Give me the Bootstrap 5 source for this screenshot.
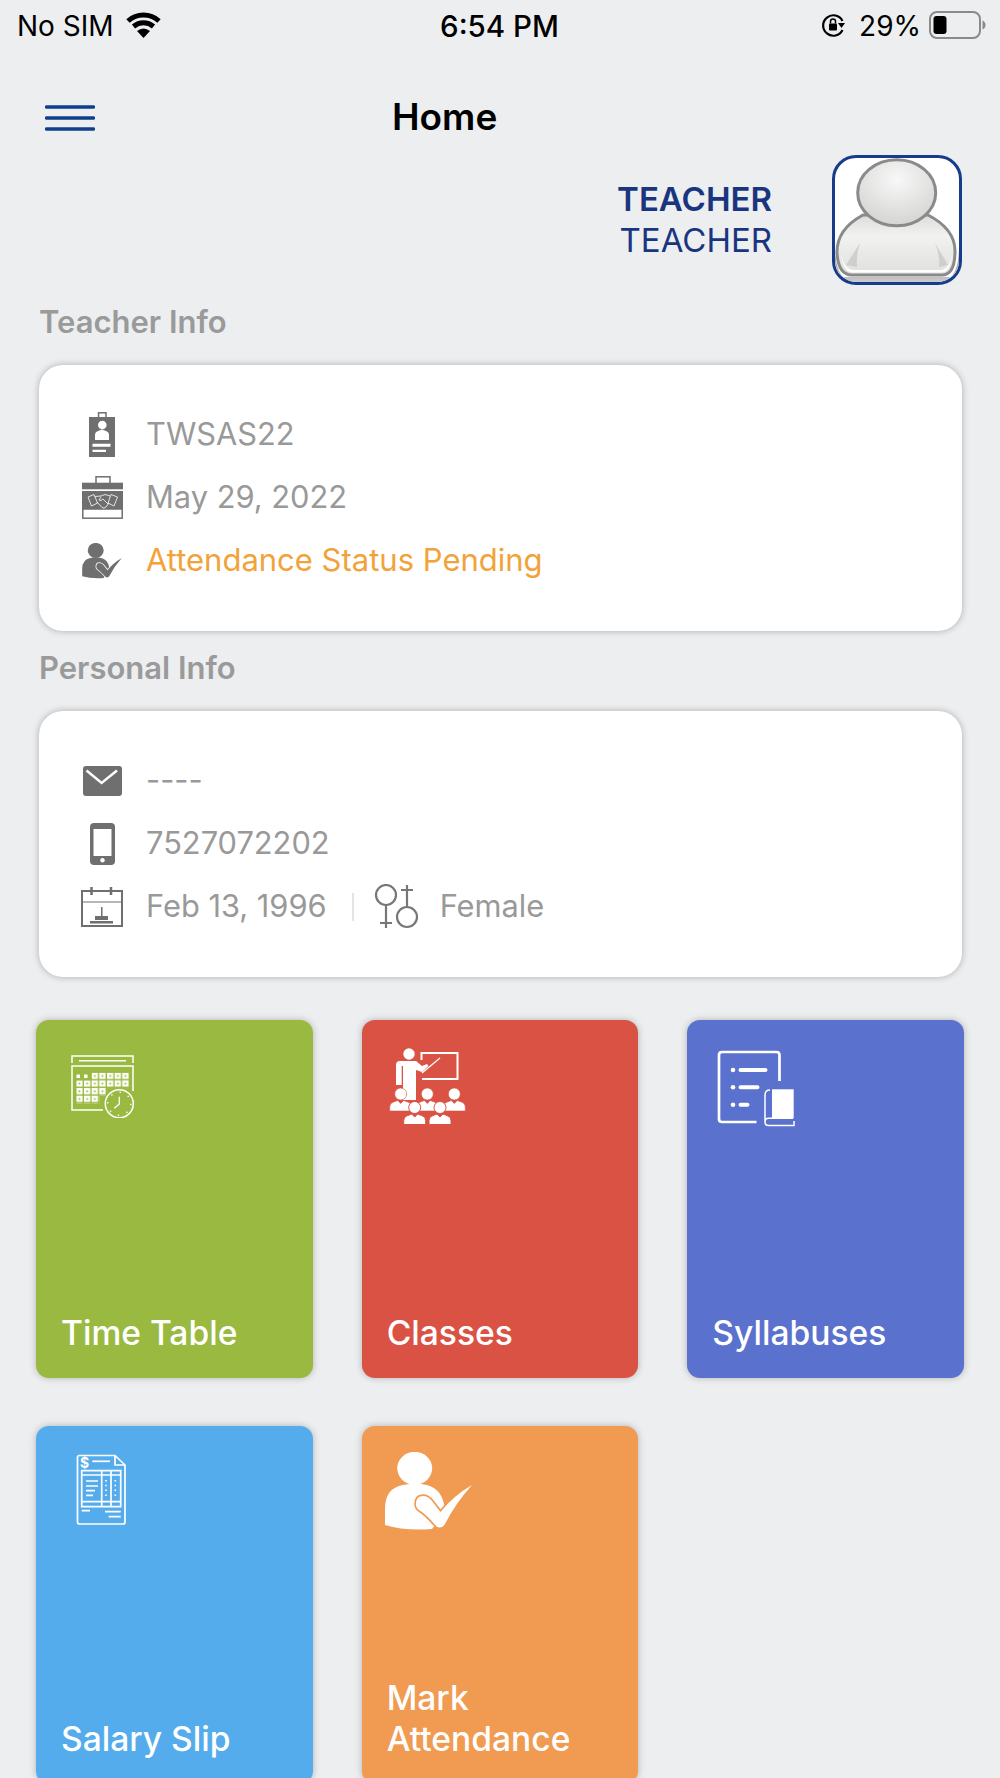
<!DOCTYPE html>
<html lang="en">
  <head>
    <meta charset="UTF-8" />
    <meta name="viewport" content="width=device-width, initial-scale=1.0" />
    <title>Home</title>
    <link
      href="https://cdn.jsdelivr.net/npm/bootstrap@5.3.2/dist/css/bootstrap.min.css"
      rel="stylesheet"
    />
    <style>
      html, body { height: 1778px; overflow: hidden; }
      body { background: #eceef0; font-family: "Inter", "Liberation Sans", sans-serif; color: #000; }
      svg { display: block; flex: none; }

      .status-bar { height: 50px; padding: 1px 14px 0 17px; font-size: 28px; line-height: 50px; }
      .status-side { flex: 1 1 0; }
      .status-time { font-weight: 500; font-size: 29.5px; margin-right: 4px; }
      .wifi-icon { margin: 0 0 3px 11px; }
      .battery-pct { margin: 0 8px 0 13px; }
      .battery-icon, .lock-icon { margin-bottom: 2px; }

      .top-bar { height: 105px; padding: 0 0 0 45px; }
      .top-title { font-size: 37px; font-weight: 600; margin: 0 0 0 297px; line-height: 1; padding-bottom: 20px; }
      .menu-icon { margin-bottom: 23px; }

      .profile-row { padding-right: 38px; gap: 60px; height: 130px; }
      .profile-name { color: #1a357f; font-size: 33px; line-height: 41px; text-align: right; }
      .profile-photo { width: 130px; height: 130px; border: 3px solid #173c8c; border-radius: 24px; background: #fff; overflow: hidden; }

      .section-title { margin: 19px 0 25px 39px; color: #9a9a9a; font-size: 31px; font-weight: 600; line-height: 36px; }
      .info-card { margin: 0 38px 0 39px; height: 266px; padding: 38px 0 0 41px; border: 0; border-radius: 24px; box-shadow: 0 0 7px rgba(0, 0, 0, .28); }
      .info-row { height: 63px; color: #999; font-size: 30.8px; }
      .info-row .ico-box { width: 44px; margin-right: 22px; }
      .status-pending { color: #f1a33a; font-size: 31px; }
      .info-sep { width: 2px; height: 28px; background: #e4e4e4; margin: 0 20px 0 25px; }
      .gender-text { margin-left: 21px; }

      .tile-grid { display: grid; grid-template-columns: repeat(3, 1fr); gap: 48px 49px; margin: 43px 36px 0; }
      .tile { height: 358px; border: 0; border-radius: 13px; padding: 0 25px 25px; color: #fff; font-size: 33.6px; font-weight: 500; line-height: 41px; box-shadow: 0 0 7px rgba(0, 0, 0, .25); }
      .tile-green { background: #9ab941; }
      .tile-red { background: #d95243; }
      .tile-indigo { background: #5a71cd; }
      .tile-sky { background: #54aced; }
      .tile-orange { background: #f19a52; }
      .ico-timetable { margin: 35px 0 0 10px; }
      .ico-classes { margin: 28px 0 0 2px; }
      .ico-syllabus { margin: 30px 0 0 5px; }
      .ico-salary { margin: 28px 0 0 15px; }
      .ico-mark { margin: 26px 0 0 -2px; }
      .check-halo { stroke: var(--halo); stroke-width: 3.5; paint-order: stroke; }
    </style>
  </head>
  <body>
    <svg width="0" height="0" class="position-absolute">
      <defs>
        <symbol id="personCheck" viewBox="0 0 87 79">
          <ellipse cx="29.7" cy="16.3" rx="17.5" ry="16.5" />
          <path d="M0 73V57Q0 36 18 33Q30 30 42 33Q56 37 59 52V62L47 77Q20 79 0 73Z" />
          <path class="check-halo" d="M31 52Q31 44 38 44Q43 44 47 49L55.500 60Q68 44 87 33Q70 52 60 72Q56 78 51 74Q42 63 34 58Q31 56 31 52Z" />
        </symbol>
        <g id="student">
          <circle r="6" />
          <path d="M-11 17v-4q0-4 4-5l4-1.500 3 3 3-3 4 1.500q4 1 4 5v4z" />
        </g>
        <pattern id="calCell" x="5.300" y="17.700" width="7.670" height="7.670" patternUnits="userSpaceOnUse">
          <path fill="#fff" fill-rule="evenodd" d="M0 0h6.300v6.300H0zM2.300 2.300v1.800h1.800V2.300z" />
        </pattern>
        <radialGradient id="headFill" cx=".5" cy=".3" r=".7">
          <stop offset="0" stop-color="#f8f8f8" />
          <stop offset="1" stop-color="#d4d4d2" />
        </radialGradient>
        <linearGradient id="bodyFill" x1="0" y1="0" x2="0" y2="1">
          <stop offset="0" stop-color="#dcdcda" />
          <stop offset=".35" stop-color="#f2f2f1" />
          <stop offset="1" stop-color="#dfdfdd" />
        </linearGradient>
        <linearGradient id="baseFill" x1="0" y1="0" x2="0" y2="1">
          <stop offset="0" stop-color="#8d8d8d" />
          <stop offset="1" stop-color="#c9c9c9" />
        </linearGradient>
      </defs>
    </svg>

    <!-- status bar -->
    <div class="status-bar d-flex align-items-center">
      <div class="status-side d-flex align-items-center">
        <span>No SIM</span>
        <svg class="wifi-icon" width="37" height="27" viewBox="0 0 37 27">
          <path d="M3 10A23 23 0 0 1 34 10M8.500 15.500A15.500 15.500 0 0 1 28.500 15.500" fill="none" stroke="#000" stroke-width="5" />
          <path d="M18.500 27L12 20Q18.500 15 25 20Z" />
        </svg>
      </div>
      <div class="status-time">6:54 PM</div>
      <div class="status-side d-flex align-items-center justify-content-end">
        <svg class="lock-icon" width="25" height="24" viewBox="0 0 25 24">
          <path d="M21.500 8A10.200 10.200 0 1 0 21.500 17" fill="none" stroke="#000" stroke-width="2.200" />
          <path d="M17 10h7l-3.500 5z" />
          <rect x="8" y="10.500" width="8" height="7" rx="1" />
          <path d="M9.500 10.500V8.500a2.500 2.500 0 0 1 5 0v2" fill="none" stroke="#000" stroke-width="1.500" />
        </svg>
        <span class="battery-pct">29%</span>
        <svg class="battery-icon" width="57" height="28" viewBox="0 0 57 28">
          <rect x="1" y="1" width="50" height="26" rx="7" fill="none" stroke="#8a8a8a" stroke-width="2" />
          <rect x="4.500" y="5" width="13" height="18" rx="3" />
          <path d="M53.500 9.500q3 1.500 3 4.500t-3 4.500z" fill="#8a8a8a" />
        </svg>
      </div>
    </div>

    <!-- top bar -->
    <div class="top-bar d-flex align-items-end">
      <svg class="menu-icon" width="50" height="28" viewBox="0 0 50 28">
        <path d="M1.500 3h47M1.500 14h47M1.500 25h47" stroke="#0f3f8c" stroke-width="3.500" stroke-linecap="round" />
      </svg>
      <h1 class="top-title">Home</h1>
    </div>

    <!-- profile -->
    <div class="profile-row d-flex justify-content-end align-items-center">
      <div class="profile-name">
        <div class="fw-semibold">TEACHER</div>
        <div>TEACHER</div>
      </div>
      <div class="profile-photo">
        <svg width="124" height="124" viewBox="3 3 124 124">
          <path d="M3 92Q3 127 24 127H106Q127 127 127 92V122H3Z" fill="url(#baseFill)" />
          <path d="M31 60Q5 74 5 97Q6 120 20 120H110Q123 120 123 96Q123 74 96 60Z" fill="url(#bodyFill)" stroke="#8a8a8a" stroke-width="3" />
          <path d="M9 98Q11 117 20 117.500H110Q119 117 120 98Q118 115 108 115H22Q12 115 9 98Z" fill="#fff" />
          <path d="M28 88L14 110L25 112Q24 100 28 88ZM103 88L116 110L107 112Q108 100 103 88Z" fill="#c4c4c2" opacity=".7" />
          <ellipse cx="64.700" cy="37.700" rx="39" ry="33" fill="url(#headFill)" stroke="#8a8a8a" stroke-width="3" />
        </svg>
      </div>
    </div>

    <!-- teacher info -->
    <h2 class="section-title">Teacher Info</h2>
    <div class="card info-card">
      <div class="info-row d-flex align-items-center">
        <div class="ico-box d-flex justify-content-center">
          <svg width="26" height="45" viewBox="0 0 26 45">
            <rect x="9.500" y=".8" width="7.500" height="5" fill="none" stroke="#6f6f6f" stroke-width="1.500" />
            <rect y="5" width="26" height="40" fill="#6f6f6f" />
            <circle cx="13.300" cy="13" r="4.300" fill="#fff" />
            <path d="M6 28v-5q0-3 3-4l4-1.500 4 1.500q3 1 3 4v5z" fill="#fff" />
            <path d="M3.500 31.700h18v3h-18zM3.500 37.700H17V40H3.500z" fill="#fff" />
          </svg>
        </div>
        <span>TWSAS22</span>
      </div>
      <div class="info-row d-flex align-items-center">
        <div class="ico-box d-flex justify-content-center">
          <svg width="41" height="43" viewBox="0 0 41 43">
            <rect x="14" y=".8" width="14" height="7" fill="none" stroke="#6f6f6f" stroke-width="1.500" />
            <rect y="6.700" width="41" height="6.600" fill="#6f6f6f" />
            <rect y="15" width="41" height="18.500" fill="#6f6f6f" />
            <rect x=".8" y="33" width="39.400" height="9.200" fill="#fff" stroke="#6f6f6f" stroke-width="1.500" />
            <path d="M6 21l6-2.500 3.500 8.500-6 3zM35.500 21L29 18.500 26 27l6 3zM13 20.500l6-.5 4-1.500 5 1.500M15 26l5 5.500q2 1.500 4-.5l3-4M19 21l-2 3q2 1.500 4-1l5 5" fill="none" stroke="#fff" stroke-width=".8" />
          </svg>
        </div>
        <span>May 29, 2022</span>
      </div>
      <div class="info-row d-flex align-items-center">
        <div class="ico-box d-flex justify-content-center">
          <svg width="40" height="36" fill="#6f6f6f" style="--halo: #fff"><use href="#personCheck" /></svg>
        </div>
        <span class="status-pending">Attendance Status Pending</span>
      </div>
    </div>

    <!-- personal info -->
    <h2 class="section-title">Personal Info</h2>
    <div class="card info-card">
      <div class="info-row d-flex align-items-center">
        <div class="ico-box d-flex justify-content-center">
          <svg width="39" height="30" viewBox="0 0 39 30">
            <rect width="39" height="30" rx="3" fill="#6f6f6f" />
            <path d="M3.500 4.500L18.600 17 34 4.500" fill="none" stroke="#fff" stroke-width="2.500" />
          </svg>
        </div>
        <span>----</span>
      </div>
      <div class="info-row d-flex align-items-center">
        <div class="ico-box d-flex justify-content-center">
          <svg width="25" height="42" viewBox="0 0 25 42">
            <rect width="25" height="42" rx="4" fill="#6f6f6f" />
            <rect x="3.500" y="6" width="18" height="27" fill="#fff" />
            <circle cx="12.500" cy="37.300" r="2.200" fill="#fff" />
          </svg>
        </div>
        <span>7527072202</span>
      </div>
      <div class="info-row d-flex align-items-center">
        <div class="ico-box d-flex justify-content-center">
          <svg width="42" height="40" viewBox="0 0 42 40">
            <rect x="1" y="4" width="40" height="35" fill="none" stroke="#6f6f6f" stroke-width="2" />
            <path d="M10.500 0v8M30 0v8" stroke="#6f6f6f" stroke-width="2.500" />
            <path d="M1 15h40" stroke="#6f6f6f" stroke-width="1.200" />
            <path d="M20 20h1.500v9H27v4H14v-4h6zM9 34h23v2.500H9z" fill="#6f6f6f" />
          </svg>
        </div>
        <span>Feb 13, 1996</span>
        <div class="info-sep"></div>
        <svg width="45" height="45" viewBox="0 0 45 45" fill="none" stroke="#777" stroke-width="2.200">
          <circle cx="12" cy="11" r="10" />
          <path d="M12 21v23M6 39h12" />
          <circle cx="33" cy="33" r="10" />
          <path d="M33 23V1M27 6h12" />
        </svg>
        <span class="gender-text">Female</span>
      </div>
    </div>

    <!-- modules -->
    <div class="tile-grid">
      <div class="card tile tile-green justify-content-between">
        <svg class="ico-timetable" width="63" height="63" viewBox="0 0 63 63" fill="none" stroke="#fff">
          <path d="M1 8V1h61v7M8 5.700h47" stroke-width="1.500" />
          <path d="M32 55H1V11h61v25" stroke-width="1.500" />
          <g stroke="none">
            <rect x="5.500" y="19.500" width="3.500" height="3.500" fill="#fff" />
            <rect x="13" y="19.500" width="3.500" height="3.500" fill="#fff" />
            <rect x="20.640" y="17.700" width="38.350" height="7.670" fill="url(#calCell)" />
            <rect x="5.300" y="25.370" width="53.690" height="7.670" fill="url(#calCell)" />
            <rect x="5.300" y="33.040" width="30.680" height="7.670" fill="url(#calCell)" />
            <rect x="5.300" y="40.710" width="23.010" height="7.670" fill="url(#calCell)" />
          </g>
          <circle cx="48.300" cy="48.700" r="14" stroke-width="1.500" />
          <circle cx="48.300" cy="48.700" r="11.500" stroke-width="1.400" stroke-dasharray="1.400 7.630" />
          <path d="M48.300 41.700V49l-5 4.300" stroke-width="1.300" />
        </svg>
        <div>Time Table</div>
      </div>

      <div class="card tile tile-red justify-content-between">
        <svg class="ico-classes" width="77" height="77" viewBox="0 0 77 77" fill="#fff">
          <circle cx="20" cy="6" r="5.700" />
          <path d="M7 17q0-4 4-4h16l6 5 5-2 1.500 2-6.500 6-6-2V52H14V18h-1.300V37H7z" />
          <path d="M33 25l18-15" stroke="#fff" stroke-width="1.300" />
          <path d="M32.500 12V5h36v26H33" fill="none" stroke="#fff" stroke-width="2" />
          <g stroke="#d95243" stroke-width=".6">
            <use href="#student" x="11.700" y="46" />
            <use href="#student" x="38.300" y="46" />
            <use href="#student" x="65.300" y="46" />
          </g>
          <g stroke="#d95243" stroke-width="1">
            <use href="#student" x="25.700" y="59.500" />
            <use href="#student" x="51" y="59.500" />
          </g>
        </svg>
        <div>Classes</div>
      </div>

      <div class="card tile tile-indigo justify-content-between">
        <svg class="ico-syllabus" width="78" height="77" viewBox="0 0 78 77" fill="none" stroke="#fff">
          <path d="M62.500 31V5q0-3-3-3H5q-3 0-3 3v64q0 3 3 3h34.500" stroke-width="2.700" />
          <path d="M23.500 20h25M23.500 37.300h17M23.500 54.700h7" stroke-width="4" stroke-linecap="round" />
          <g fill="#fff" stroke="none">
            <circle cx="16" cy="20" r="2.300" />
            <circle cx="16" cy="37.300" r="2.300" />
            <circle cx="16" cy="54.700" r="2.300" />
            <path d="M55 39.300h21.700v29H55z" />
          </g>
          <path d="M53 40q-5 0-5 5v27q0 3.500 3.500 3.500H77V71M48 72q0-3.700 3.500-3.700H76" stroke-width="1.500" />
        </svg>
        <div>Syllabuses</div>
      </div>

      <div class="card tile tile-sky justify-content-between">
        <svg class="ico-salary" width="50" height="71" viewBox="0 0 50 71" fill="none" stroke="#fff" stroke-width="1.700">
          <path d="M39 1.500H3.500q-2 0-2 2V68q0 2 2 2H47q2 0 2-2V11zV11h10" stroke-linejoin="round" />
          <text x="4" y="14" fill="#fff" stroke="none" font-size="14" font-weight="700">$</text>
          <path d="M16.300 7.300H34" />
          <path d="M5.700 16.700h39v36h-39zM5.700 21h39M5.700 47.700h39M25.700 16.700v36M35 16.700v36" />
          <path d="M10 27h12M10 32h12M10 36.700h9M10 41.300h7" />
          <path d="M30 26v17M39.300 26v17" stroke-dasharray="1.500 3.300" />
          <path d="M5.700 56.700H14M29 57.700h15.700M32.700 62.700h12" />
        </svg>
        <div>Salary Slip</div>
      </div>

      <div class="card tile tile-orange justify-content-between">
        <svg class="ico-mark" width="87" height="79" fill="#fff" style="--halo: #f19a52"><use href="#personCheck" /></svg>
        <div>Mark<br />Attendance</div>
      </div>
    </div>

    <script src="https://cdn.jsdelivr.net/npm/bootstrap@5.3.2/dist/js/bootstrap.bundle.min.js"></script>
  </body>
</html>
